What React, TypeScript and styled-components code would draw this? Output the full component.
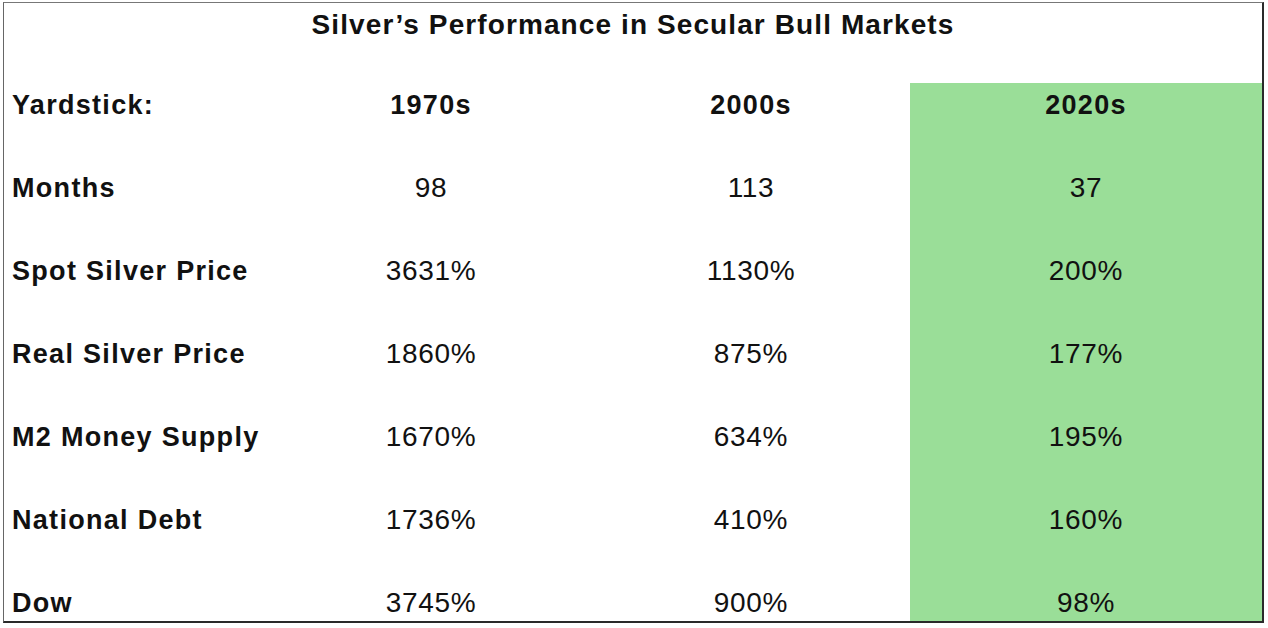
import React from "react";
import styled, { createGlobalStyle } from "styled-components";

const GlobalStyle = createGlobalStyle`
  html, body {
    margin: 0;
    padding: 0;
    background: #ffffff;
  }
`;

const Sheet = styled.div`
  box-sizing: border-box;
  margin: 2px 0 0 3px;
  width: 1261px;
  height: 621px;
  border-top: 1px solid #777;
  border-left: 1px solid #666;
  border-right: 2px solid #2a2a2a;
  border-bottom: 2px solid #2a2a2a;
  font-family: "Liberation Sans", Arial, sans-serif;
  color: #111;
  display: flex;
  flex-direction: column;
`;

const Title = styled.div`
  height: 80px;
  box-sizing: border-box;
  padding-top: 6px;
  text-align: center;
  font-weight: 700;
  font-size: 28px;
  letter-spacing: 1.1px;
  line-height: 32px;
`;

const Grid = styled.div`
  flex: 1;
  display: grid;
  grid-template-columns: 266px 322px 318px 1fr;
  grid-template-rows: 40px repeat(6, 83px);
`;

const Cell = styled.div<{ $label?: boolean; $bold?: boolean; $hl?: boolean }>`
  display: flex;
  align-items: flex-end;
  justify-content: ${(p) => (p.$label ? "flex-start" : "center")};
  padding: 0 0 2px ${(p) => (p.$label ? "8px" : "0")};
  background: ${(p) => (p.$hl ? "#9ade98" : "transparent")};
  font-size: ${(p) => (p.$label || p.$bold ? "27px" : "28px")};
  font-weight: ${(p) => (p.$bold || p.$label ? 700 : 400)};
  letter-spacing: ${(p) => (p.$label || p.$bold ? "1.3px" : "0.7px")};
  line-height: 32px;
  white-space: nowrap;
`;

const header = ["Yardstick:", "1970s", "2000s", "2020s"];

const rows: string[][] = [
  ["Months", "98", "113", "37"],
  ["Spot Silver Price", "3631%", "1130%", "200%"],
  ["Real Silver Price", "1860%", "875%", "177%"],
  ["M2 Money Supply", "1670%", "634%", "195%"],
  ["National Debt", "1736%", "410%", "160%"],
  ["Dow", "3745%", "900%", "98%"],
];

const App: React.FC = () => {
  return (
    <>
      <GlobalStyle />
      <Sheet>
        <Title>Silver’s Performance in Secular Bull Markets</Title>
        <Grid>
          {header.map((h, i) => (
            <Cell key={h} $label={i === 0} $bold $hl={i === 3}>
              {h}
            </Cell>
          ))}
          {rows.map((r) =>
            r.map((v, i) => (
              <Cell key={r[0] + i} $label={i === 0} $hl={i === 3}>
                {v}
              </Cell>
            ))
          )}
        </Grid>
      </Sheet>
    </>
  );
};

export default App;
